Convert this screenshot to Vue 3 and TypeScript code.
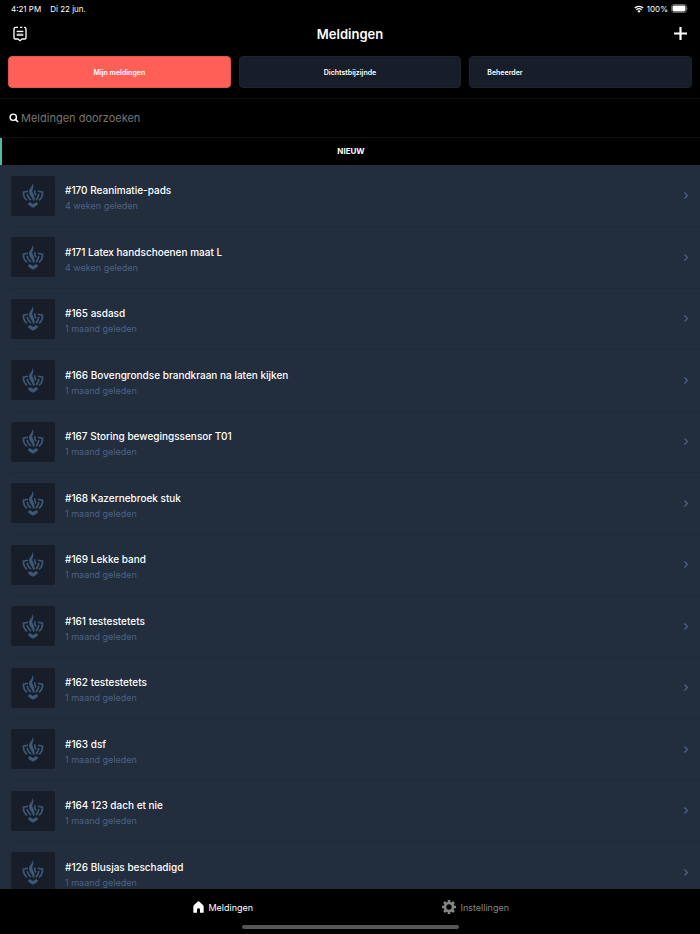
<script setup lang="ts">
import { ref } from 'vue'

interface Melding {
  id: number
  title: string
  age: string
}

const tabs: string[] = ['Mijn meldingen', 'Dichtstbijzijnde', 'Beheerder']
const activeTab = ref(0)
const query = ref('')

const meldingen: Melding[] = [
  { id: 170, title: 'Reanimatie-pads', age: '4 weken geleden' },
  { id: 171, title: 'Latex handschoenen maat L', age: '4 weken geleden' },
  { id: 165, title: 'asdasd', age: '1 maand geleden' },
  { id: 166, title: 'Bovengrondse brandkraan na laten kijken', age: '1 maand geleden' },
  { id: 167, title: 'Storing bewegingssensor T01', age: '1 maand geleden' },
  { id: 168, title: 'Kazernebroek stuk', age: '1 maand geleden' },
  { id: 169, title: 'Lekke band', age: '1 maand geleden' },
  { id: 161, title: 'testestetets', age: '1 maand geleden' },
  { id: 162, title: 'testestetets', age: '1 maand geleden' },
  { id: 163, title: 'dsf', age: '1 maand geleden' },
  { id: 164, title: '123 dach et nie', age: '1 maand geleden' },
  { id: 126, title: 'Blusjas beschadigd', age: '1 maand geleden' },
]
</script>

<template>
  <div class="app">
    <div class="status">
      <span>4:21 PM</span>
      <span>Di 22 jun.</span>
      <span class="status-right">
        <svg class="wifi" viewBox="0 0 20 16" aria-hidden="true">
          <path d="M1.5 6a12.5 12.5 0 0 1 17 0M4.7 9.5a8 8 0 0 1 10.6 0" fill="none" stroke="#fff" stroke-width="2.5" />
          <path d="M6.6 12a5 5 0 0 1 6.8 0L10 15.6z" fill="#fff" />
        </svg>
        <span>100%</span>
        <svg class="battery" viewBox="0 0 36 18" aria-hidden="true">
          <rect x="1" y="1" width="30" height="16" rx="4.5" fill="#000" stroke="#777" stroke-width="1.6" />
          <rect x="3" y="3" width="26" height="12" rx="2.8" fill="#fff" />
          <path d="M33 6.2q2.4 2.8 0 5.6z" fill="#777" />
        </svg>
      </span>
    </div>

    <header class="header">
      <button class="icon-button" type="button" aria-label="Berichten">
        <svg class="note" viewBox="0 0 42 48" aria-hidden="true">
          <path d="M15 4H8Q3 4 3 9v26q0 4 4 4h8l6 5 6-5h8q4 0 4-4V9q0-5-5-5h-1M21 4h7" fill="none" stroke="#fff" stroke-width="4" />
          <path d="M11 16h20M11 27h20" fill="none" stroke="#fff" stroke-width="4" />
          <path d="M11 21.500h20" fill="none" stroke="#999" stroke-width="2" />
        </svg>
      </button>
      <h1>Meldingen</h1>
      <button class="icon-button add" type="button" aria-label="Melding toevoegen">
        <svg class="plus" viewBox="0 0 12 12" aria-hidden="true">
          <path d="M6 0v12M0 6h12" stroke="#fff" stroke-width="2" />
        </svg>
      </button>
    </header>

    <div class="tabs">
      <button
        v-for="(tab, i) in tabs"
        :key="tab"
        type="button"
        class="tab"
        :class="{ active: activeTab === i, start: i === 2 }"
        :aria-pressed="activeTab === i"
        @click="activeTab = i"
      >{{ tab }}</button>
    </div>

    <label class="search">
      <svg class="search-icon" viewBox="0 0 27 27" aria-hidden="true">
        <circle cx="11.500" cy="11.500" r="8.500" fill="none" stroke="#fff" stroke-width="3.800" />
        <path d="M17.500 17.500l7 7" stroke="#fff" stroke-width="4.200" />
      </svg>
      <input v-model="query" type="text" placeholder="Meldingen doorzoeken" aria-label="Meldingen doorzoeken" />
    </label>

    <h2 class="section">NIEUW</h2>

    <ul class="list">
      <li v-for="m in meldingen" :key="m.id">
        <a class="row" href="#">
          <span class="thumb">
            <svg class="emblem" viewBox="0 0 66 76" aria-hidden="true">
              <path class="shape" d="M31 0c6 9 2 15 0 21-2 8 10 16 6 33h-4c-2-12-12-17-12-28C21 15 33 12 31 0z" />
              <path class="line" d="M18 25L4 28q-1 15 11 25M48 25l14 3q1 15-11 25" />
              <path class="line" d="M15 33q2 11 12 19M39 22q-2 8 3 16M51 33q-2 11-9 19" />
              <path class="shape" d="M23 58l10 6 10-6 6 6q-7 8-16 11-9-3-16-11z" />
            </svg>
          </span>
          <span class="text">
            <span class="title">#{{ m.id }} {{ m.title }}</span>
            <span class="age">{{ m.age }}</span>
          </span>
          <svg class="chevron" viewBox="0 0 4 7" aria-hidden="true">
            <path d="M.5.5l3 3-3 3" fill="none" stroke="#4f678a" stroke-width="1.200" />
          </svg>
        </a>
      </li>
    </ul>

    <footer class="footer">
      <nav class="nav">
        <a class="nav-item current" href="#">
          <svg class="home" viewBox="0 0 33 36" aria-hidden="true">
            <path d="M16.500 1Q18 1 20 3l10 9q2 2 2 5v18H21v-9q0-4-4.500-4T12 26v9H1V17q0-3 2-5l10-9q2-2 3.500-2z" fill="#fff" />
          </svg>
          <span>Meldingen</span>
        </a>
        <a class="nav-item" href="#">
          <svg class="gear" viewBox="0 0 42 42" aria-hidden="true">
            <circle cx="21" cy="21" r="12" fill="none" stroke="#858585" stroke-width="8" />
            <path d="M21 0v8M21 34v8M0 21h8M34 21h8M6.200 6.200l6 6M29.800 29.800l6 6M35.800 6.200l-6 6M12.200 29.800l-6 6" stroke="#858585" stroke-width="8" />
          </svg>
          <span>Instellingen</span>
        </a>
      </nav>
      <div class="home-bar"></div>
    </footer>
  </div>
</template>

<style>
body {
  background: #000;
}
</style>

<style scoped>
* {
  box-sizing: border-box;
}

.app {
  display: flex;
  flex-direction: column;
  height: 100vh;
  background: #000;
  color: #fff;
  font-family: Inter, "Liberation Sans", sans-serif;
}

button {
  padding: 0;
  border: 0;
  background: none;
  color: inherit;
  font-family: inherit;
  cursor: pointer;
}

a {
  color: inherit;
  text-decoration: none;
}

svg {
  display: block;
  flex: none;
}

.status {
  display: flex;
  align-items: center;
  gap: 9px;
  height: 17px;
  padding: 0 11px;
  font-size: 8px;
}

.status-right {
  display: flex;
  align-items: center;
  gap: 3px;
  margin-left: auto;
}

.wifi {
  width: 10px;
  height: 8px;
}

.battery {
  width: 18px;
  height: 9px;
}

.header {
  display: grid;
  grid-template-columns: 1fr auto 1fr;
  align-items: center;
  height: 33px;
  padding: 0 13px;
}

.icon-button {
  justify-self: start;
}

.add {
  justify-self: end;
}

.note {
  width: 14px;
  height: 16px;
}

.plus {
  width: 13px;
  height: 13px;
}

h1 {
  margin: 0;
  font-size: 13px;
  font-weight: 600;
}

.tabs {
  display: grid;
  grid-template-columns: repeat(3, 1fr);
  gap: 8px;
  padding: 6px 8px 10px;
  border-bottom: 1px solid #0c1118;
}

.tab {
  height: 32px;
  padding: 0 17px;
  border: 1px solid #1b2430;
  border-radius: 4px;
  background: #171e29;
  font-size: 7px;
  font-weight: 600;
}

.tab.active {
  border-color: #e0554e;
  background: #ff5f57;
}

.tab.start {
  text-align: left;
}

.search {
  display: flex;
  align-items: center;
  gap: 2px;
  height: 39px;
  padding: 0 9px;
  border-bottom: 1px solid #0c1118;
}

.search-icon {
  width: 10px;
  height: 10px;
}

input {
  flex: 1;
  min-width: 0;
  padding: 0;
  border: 0;
  outline: 0;
  background: none;
  color: #fff;
  font-family: inherit;
  font-size: 11px;
}

input::placeholder {
  color: #757575;
  opacity: 1;
}

.section {
  margin: 0;
  border-left: 2px solid #53b9a2;
  font-size: 8px;
  font-weight: 700;
  line-height: 27px;
  text-align: center;
}

.list {
  flex: 1;
  min-height: 0;
  margin: 0;
  padding: 0;
  overflow-y: auto;
  scrollbar-width: none;
  background: #222d3d;
  list-style: none;
}

.row {
  display: flex;
  align-items: center;
  gap: 10px;
  height: 61px;
  padding: 0 12px 0 11px;
}

li:nth-child(even) .row {
  height: 62px;
}

li + li {
  background: linear-gradient(#1f2937, #1f2937) 11px 0 / 100% 1px no-repeat;
}

.thumb {
  display: grid;
  place-items: center;
  width: 44px;
  height: 40px;
  border-radius: 2px;
  background: #171e29;
}

.emblem {
  width: 22px;
  height: 25px;
}

.shape {
  fill: #3f5877;
}

.line {
  fill: none;
  stroke: #3f5877;
  stroke-width: 5px;
}

.text {
  display: flex;
  flex: 1;
  flex-direction: column;
  min-width: 0;
  padding-top: 5px;
}

.title {
  font-size: 10px;
  font-weight: 500;
  line-height: 15px;
}

.age {
  color: #4d6385;
  font-size: 9px;
  font-weight: 400;
  line-height: 15px;
}

.chevron {
  width: 4px;
  height: 7px;
}

.footer {
  flex: none;
  height: 45px;
}

.nav {
  display: grid;
  grid-template-columns: 1fr 1fr;
  padding: 0 98px 0 97px;
}

.nav-item {
  display: flex;
  align-items: center;
  justify-content: center;
  gap: 4px;
  height: 36px;
  color: #858585;
  font-size: 9px;
}

.nav-item.current {
  color: #fff;
}

.home {
  width: 11px;
  height: 12px;
}

.gear {
  width: 14px;
  height: 14px;
}

.home-bar {
  width: 31%;
  height: 4px;
  margin: 0 auto;
  border-radius: 2px;
  background: #555;
}
</style>
